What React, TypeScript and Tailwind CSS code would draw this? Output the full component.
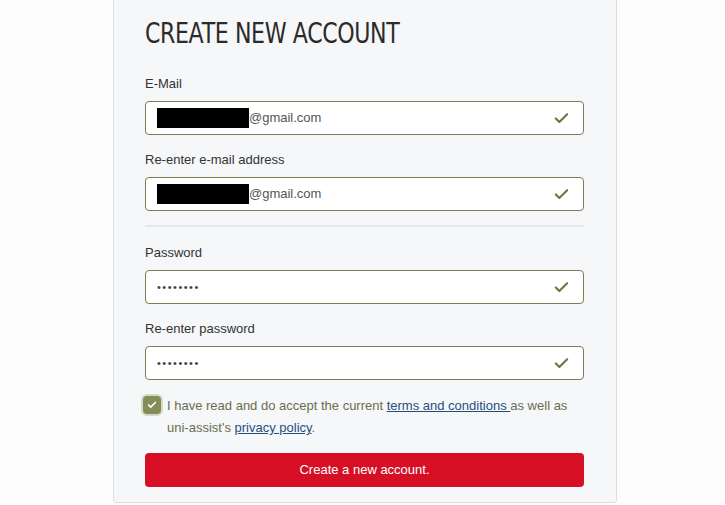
import { Check } from 'lucide-react';

const font = { fontFamily: '"Liberation Sans", Arial, sans-serif' };

function Field({ label, value, redacted, password }: { label: string; value: string; redacted?: boolean; password?: boolean }) {
  return (
    <div className="flex flex-col">
      <label className="text-[13px] text-[#333] leading-[17px] mb-[9px]">{label}</label>
      <div className="h-[34px] flex items-center border border-[#7d7d55] rounded-[4px] bg-white pl-[11px] pr-[13px]">
        {redacted && <span className="w-[92px] h-[20px] bg-black" />}
        <span className={password ? 'text-[11px] tracking-[1.5px] text-[#444] mt-[1px]' : 'text-[13px] text-[#555]'}>{value}</span>
        <Check className="ml-auto text-[#6a7a3c]" size={17} strokeWidth={3} />
      </div>
    </div>
  );
}

export default function App() {
  return (
    <div className="min-h-[505px] w-[725px] bg-[#fdfdfd] flex" style={font}>
      <div className="w-[504px] h-[504px] ml-[113px] -mt-px bg-[#f6f7f9] border border-[#dcdde0] rounded-b-[3px] pl-[31px] pr-[32px] pt-[17px]">
        <h1
          className="text-[28px] leading-[34px] text-[#2b2b2b] tracking-[-0.5px] mb-[24px] whitespace-nowrap origin-left scale-x-[0.79]"
          style={{ fontFamily: '"DejaVu Sans", sans-serif' }}
        >
          CREATE NEW ACCOUNT
        </h1>
        <div className="flex flex-col gap-[16px]">
          <Field label="E-Mail" value="@gmail.com" redacted />
          <Field label="Re-enter e-mail address" value="@gmail.com" redacted />
        </div>
        <div className="h-[2px] bg-[#e6e7ea] mt-[14px] mb-[17px]" />
        <div className="flex flex-col gap-[16px]">
          <Field label="Password" value="••••••••" password />
          <Field label="Re-enter password" value="••••••••" password />
        </div>
        <div className="flex items-start mt-[15px] ml-[-2px]">
          <span className="w-[18px] h-[18px] mt-[1px] rounded-[4px] bg-[#838d58] ring-2 ring-[#d6dac4] flex items-center justify-center shrink-0">
            <Check className="text-white" size={10} strokeWidth={4} />
          </span>
          <p className="ml-[6px] text-[13px] leading-[22px] text-[#6b6d4f]">
            I have read and do accept the current <a className="text-[#1f4f7f] underline">terms and conditions&nbsp;</a>as well as uni-assist's <a className="text-[#1f4f7f] underline">privacy policy</a>.
          </p>
        </div>
        <button className="mt-[14px] w-full h-[34px] rounded-[4px] bg-[#d70f25] text-white text-[13px]">
          Create a new account.
        </button>
      </div>
    </div>
  );
}
